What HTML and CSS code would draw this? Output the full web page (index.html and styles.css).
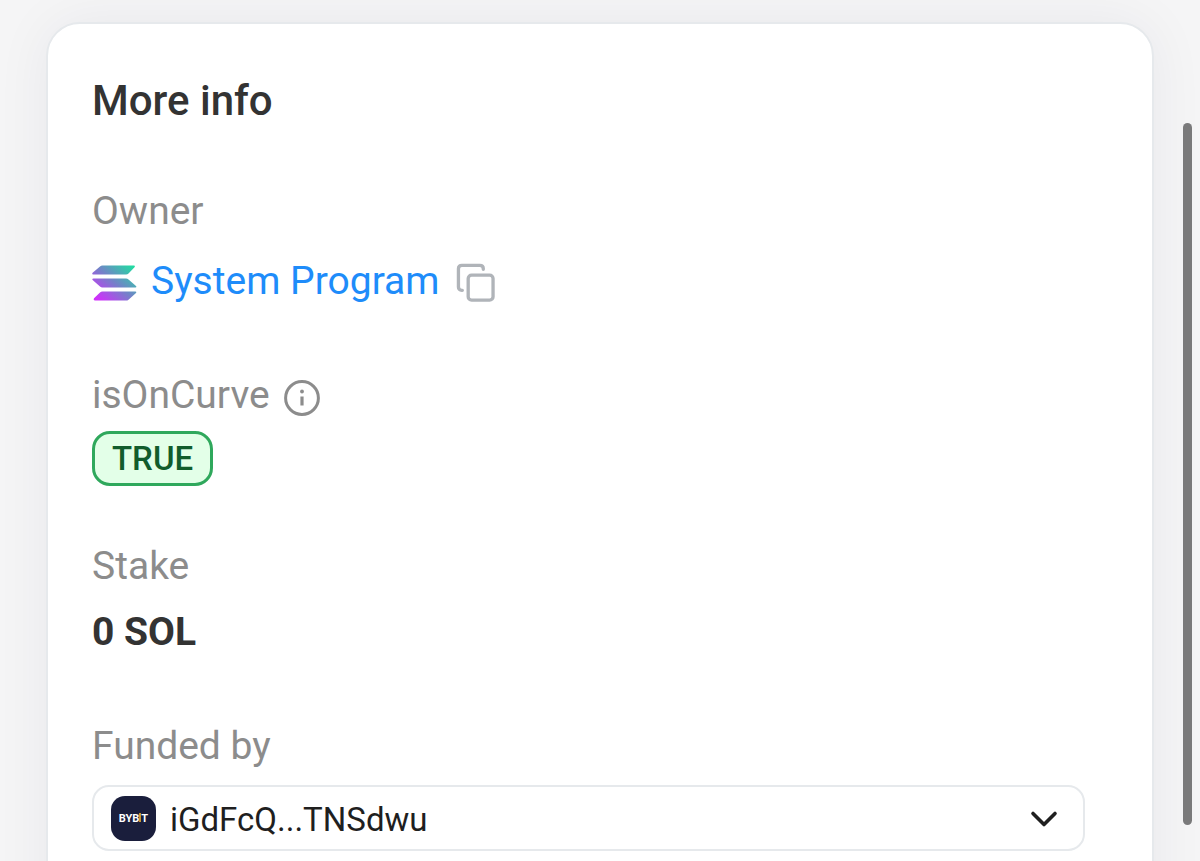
FILE: index.html
```html
<!DOCTYPE html>
<html lang="en">
<head>
    <meta charset="UTF-8">
    <meta name="viewport" content="width=device-width, initial-scale=1.0">
    <title>More info</title>
    <link rel="stylesheet" href="styles.css">
</head>
<body>
    <main class="card">
        <h1 class="card-title">More info</h1>

        <section class="field">
            <h2 class="label">Owner</h2>
            <div class="owner">
                <svg class="sol-logo" viewBox="0 0 45 36" aria-hidden="true">
                    <defs>
                        <linearGradient id="sol" gradientUnits="userSpaceOnUse" x1="39" y1="0" x2="8" y2="36">
                            <stop offset="0" stop-color="#22dba2"/>
                            <stop offset="0.5" stop-color="#7382c8"/>
                            <stop offset="1" stop-color="#d030fb"/>
                        </linearGradient>
                    </defs>
                    <g fill="url(#sol)">
                        <path d="M8 1.400Q9 .4 10.500.4H42Q43.500.8 42.500 2.200L36.500 8.500Q35.500 9.400 34 9.400H1Q-.3 9 .6 7.800Z"/>
                        <path d="M1.500 13.400H34Q35.500 13.400 36.500 14.400L44 21Q45 22.300 43.500 22.500H10.500Q9 22.500 8 21.500L.6 15Q-.3 13.700 1.500 13.400Z"/>
                        <path d="M10.500 26.500H43.500Q45 26.800 44 28L36.500 34.700Q35.500 35.600 34 35.600H3Q1 35.200 2 33.200L8 27.500Q9 26.500 10.500 26.500Z"/>
                    </g>
                </svg>
                <a class="owner-link" href="#">System Program</a>
                <button class="icon-btn" type="button" aria-label="Copy address">
                    <svg width="39" height="39" viewBox="0 0 40 40" fill="none" stroke="#b0b4b9" stroke-width="3.400" stroke-linecap="round">
                        <path d="M6.500 28H6Q2.500 28 2.500 24.500V6Q2.500 2.500 6 2.500H24.500Q28 2.500 28 6V6.500"/>
                        <rect x="12.500" y="12.500" width="25.500" height="25.500" rx="3.500"/>
                    </svg>
                </button>
            </div>
        </section>

        <section class="field">
            <h2 class="label">isOnCurve
                <svg class="info" width="38" height="38" viewBox="0 0 38 38" role="img" aria-label="Info">
                    <circle cx="19" cy="19" r="16.400" fill="none" stroke="#8c8c8c" stroke-width="3"/>
                    <circle cx="19" cy="12.500" r="1.900" fill="#8c8c8c"/>
                    <path d="M19 17.500V26.500" stroke="#8c8c8c" stroke-width="3.200"/>
                </svg>
            </h2>
            <span class="badge">TRUE</span>
        </section>

        <section class="field">
            <h2 class="label">Stake</h2>
            <p class="value">0 SOL</p>
        </section>

        <section class="field">
            <label class="label" for="funder">Funded by</label>
            <div class="select-box">
                <select id="funder">
                    <option>iGdFcQ...TNSdwu</option>
                </select>
                <span class="bybit" aria-hidden="true">BYB<i></i>T</span>
                <svg class="chevron" width="28" height="18" viewBox="0 0 28 18" fill="none" stroke="#1f1f1f" stroke-width="3.600" stroke-linecap="round" stroke-linejoin="round" aria-hidden="true">
                    <path d="M3 3.500L14 14.500L25 3.500"/>
                </svg>
            </div>
        </section>
    </main>
    <div class="scroll-thumb"></div>
</body>
</html>
```
FILE: styles.css
```css
* {
    box-sizing: border-box;
}
body {
    margin: 0;
    padding: 22px 46px 0;
    height: 100vh;
    overflow: hidden;
    background: #f5f5f6;
    color: #333;
    font-family: Roboto, sans-serif;
}
.card {
    padding: 52px 67px 46px 44px;
    background: #fff;
    border: 2px solid #e6e9ec;
    border-radius: 34px;
    box-shadow: 0 0 56px rgba(20, 35, 70, 0.06);
}
.card-title {
    margin: 0 0 61px;
    font-size: 42px;
    line-height: 50px;
    font-weight: 500;
}
.field {
    margin-bottom: 66px;
}
.field:nth-of-type(2) {
    margin-bottom: 56px;
}
.label {
    display: flex;
    align-items: center;
    gap: 13px;
    margin: 0;
    color: #8c8c8c;
    font-size: 39px;
    line-height: 48px;
    font-weight: 400;
}
.owner {
    display: flex;
    align-items: center;
    margin-top: 22px;
    font-size: 39px;
    line-height: 48px;
}
.sol-logo {
    width: 45px;
    height: 36px;
    margin-top: 3px;
    margin-right: 14px;
}
.owner-link {
    color: #1e8cfa;
    text-decoration: none;
}
.icon-btn {
    display: flex;
    margin-left: 16px;
    padding: 2px 0 0;
    border: none;
    background: none;
    cursor: pointer;
}
.info {
    margin-top: 6px;
}
.badge {
    display: block;
    width: fit-content;
    margin-top: 12px;
    padding: 0 17px;
    background: #e3ffe8;
    border: 3px solid #2fa85c;
    border-radius: 18px;
    color: #115c2c;
    font-size: 33px;
    line-height: 49px;
    font-weight: 500;
}
.value {
    margin: 18px 0 0;
    font-size: 39px;
    line-height: 48px;
    font-weight: 700;
}
.select-box {
    position: relative;
    margin-top: 15px;
}
.select-box select {
    display: block;
    width: 100%;
    height: 66px;
    padding: 2px 70px 0 76px;
    appearance: none;
    background: #fff;
    border: 2px solid #e6e9ec;
    border-radius: 17px;
    color: #1f1f1f;
    font-family: inherit;
    font-size: 33px;
}
.bybit {
    position: absolute;
    top: 11px;
    left: 19px;
    display: flex;
    align-items: center;
    justify-content: center;
    width: 45px;
    height: 45px;
    background: #1a1e3c;
    border-radius: 14px;
    color: #fff;
    font-size: 11px;
    font-weight: 700;
    pointer-events: none;
}
.bybit i {
    width: 2px;
    height: 9px;
    margin-bottom: 3px;
    background: #c9962e;
}
.chevron {
    position: absolute;
    top: 25px;
    right: 27px;
    pointer-events: none;
}
.scroll-thumb {
    position: fixed;
    top: 123px;
    right: 8px;
    bottom: 36px;
    width: 9px;
    background: #7a7a7b;
    border-radius: 5px;
}
```
